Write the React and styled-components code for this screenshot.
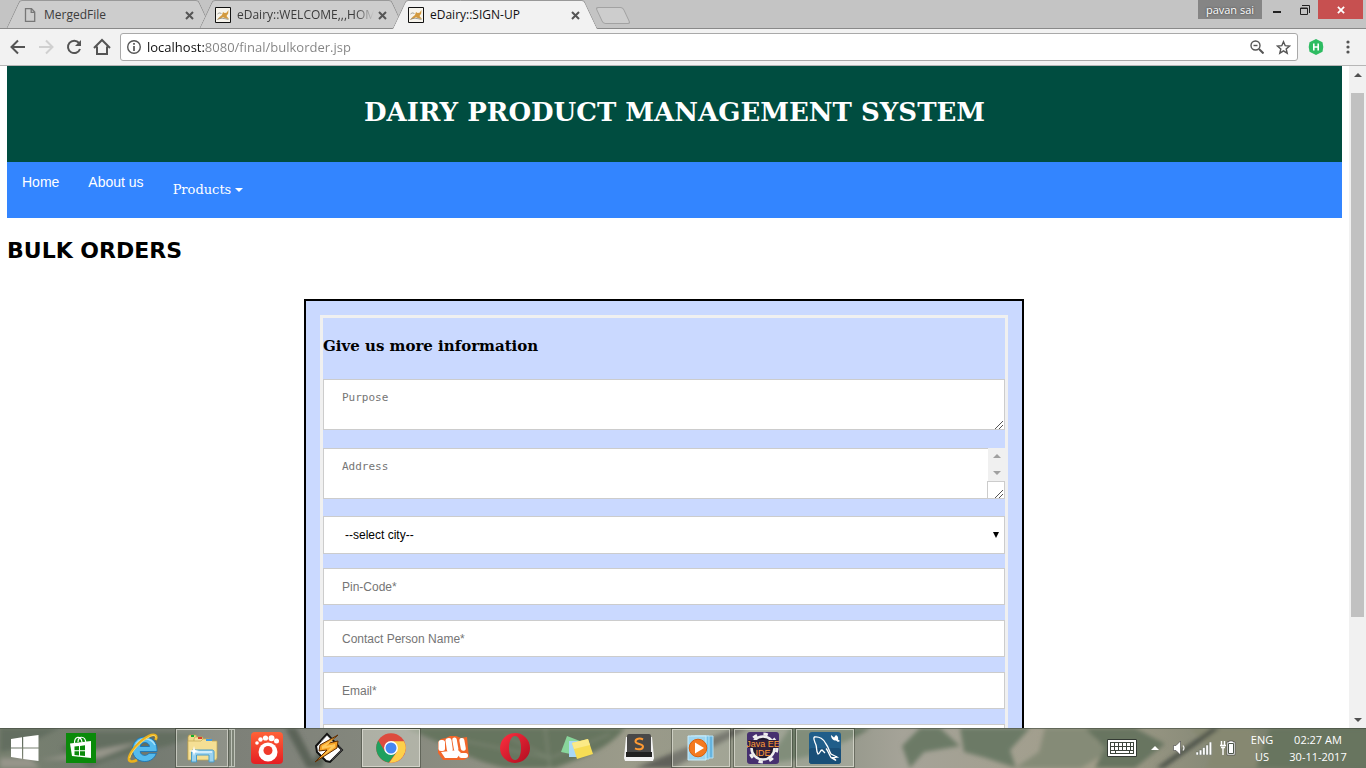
import React from "react";
import styled, { createGlobalStyle, css } from "styled-components";

const ui = `"Open Sans", "Noto Sans", sans-serif`;
const arial = `"Liberation Sans", Arial, sans-serif`;
const slab = `"DejaVu Serif", serif`;

const GlobalStyle = createGlobalStyle`
  *, *::before, *::after { box-sizing: border-box; }
  body { margin: 0; overflow: hidden; background: #fff; font-family: ${arial}; }
  button { padding: 0; border: 0; background: none; font: inherit; color: inherit; }
  svg { display: block; flex: none; }
`;

const Screen = styled.div`
  display: flex;
  flex-direction: column;
  height: 100vh;
`;

/* ---------- browser frame ---------- */

const TabStrip = styled.header`
  display: flex;
  justify-content: space-between;
  height: 29px;
  background: #c4c4c4;
  border-bottom: 1px solid #898989;
`;

const Tabs = styled.div`
  display: flex;
  padding-left: 6px;
`;

const tabEdge = css`
  content: "";
  position: absolute;
  top: 0;
  bottom: ${(p) => (p.$active ? "-1px" : "0")};
  width: 60%;
  background: ${(p) => (p.$active ? "#f2f2f2" : "#cdcdcd")};
  border-top: 1px solid #999;
  z-index: -1;
`;

const Tab = styled.div`
  position: relative;
  z-index: ${(p) => (p.$active ? 2 : 1)};
  isolation: isolate;
  display: flex;
  align-items: center;
  width: 206px;
  height: 28px;
  margin-right: -13px;
  padding: 2px 18px 0 16px;
  font: 12px/16px ${ui};
  color: ${(p) => (p.$active ? "#111" : "#3c3c3c")};

  &::before {
    ${tabEdge}
    left: 7px;
    border-left: 1px solid #8f8f8f;
    border-top-left-radius: 3px;
    transform: skewX(-25deg);
  }
  &::after {
    ${tabEdge}
    right: 7px;
    border-right: 1px solid #8f8f8f;
    border-top-right-radius: 3px;
    transform: skewX(25deg);
  }
`;

const TabTitle = styled.span`
  flex: 1;
  min-width: 0;
  margin: 0 4px 0 6px;
  overflow: hidden;
  white-space: nowrap;
  mask-image: ${(p) => (p.$fade ? "linear-gradient(to left, transparent, #000 18px)" : "none")};
`;

const NewTab = styled.button`
  width: 28px;
  height: 17px;
  margin: 7px 0 0 14px;
  border: 1px solid #a2a2a2;
  border-radius: 3px;
  background: #cdcdcd;
  transform: skewX(25deg);
`;

const WindowControls = styled.div`
  display: flex;
  align-items: flex-start;
  padding-right: 3px;
`;

const UserTag = styled.button`
  width: 64px;
  height: 19px;
  background: #858585;
  color: #fff;
  font: 11px/19px ${ui};
  text-shadow: 0 0 2px #333;
`;

const WindowButton = styled.button`
  display: flex;
  align-items: center;
  justify-content: center;
  width: ${(p) => p.$width}px;
  height: 19px;
  background: ${(p) => (p.$close ? "#c75050" : "transparent")};
`;

const Toolbar = styled.div`
  display: flex;
  align-items: center;
  height: 37px;
  padding: 0 4px 0 10px;
  background: #f2f2f2;
  border-bottom: 1px solid #b6b6b6;
`;

const ToolButton = styled.button`
  display: flex;
  align-items: center;
  justify-content: center;
  width: ${(p) => p.$width || 28}px;
  height: 28px;
`;

const Navigation = styled.div`
  display: flex;
  margin-left: -6px;
  padding-right: 4px;
`;

const Omnibox = styled.div`
  display: flex;
  align-items: center;
  flex: 1;
  height: 28px;
  padding: 0 1px 0 5px;
  background: #fff;
  border: 1px solid #a9a9a9;
  border-radius: 3px;
`;

const Address = styled.input`
  flex: 1;
  min-width: 0;
  height: 24px;
  margin-left: 5px;
  padding: 0;
  border: 0;
  outline: 0;
  font: 13px/24px ${ui};
  color: transparent;
  caret-color: #000;
  background: linear-gradient(to right, #111 58px, #828282 58px);
  background-clip: text;
`;

/* ---------- web page ---------- */

const Viewport = styled.div`
  display: flex;
  flex: 1;
  min-height: 0;
`;

const Page = styled.main`
  flex: 1;
  min-width: 0;
  padding: 0 7px;
  overflow: hidden;
  background: #fff;
`;

const Banner = styled.div`
  display: flex;
  align-items: center;
  justify-content: center;
  height: 96px;
  padding-bottom: 4px;
  background: #004d40;
`;

const SiteTitle = styled.h1`
  margin: 0;
  font: bold 26px/36px ${slab};
  color: #fff;
`;

const SiteNav = styled.nav`
  display: flex;
  align-items: flex-start;
  gap: 29px;
  height: 56px;
  padding: 10px 15px;
  background: #3385ff;
`;

const NavLink = styled.a`
  font: 14px/20px ${arial};
  color: #fff;
  text-decoration: none;
`;

const NavMenu = styled.button`
  display: flex;
  align-items: center;
  gap: 4px;
  height: 36px;
  font: 13px/20px ${slab};
  color: #fff;
`;

const PageTitle = styled.h2`
  margin: 19px 0 0;
  font: bold 22px/28px "DejaVu Sans", Verdana, sans-serif;
  color: #000;
`;

const FormArea = styled.div`
  display: flex;
  justify-content: center;
  margin-top: 34px;
  padding-right: 21px;
`;

const OrderForm = styled.form`
  width: 720px;
  max-width: 100%;
  padding: 14px;
  background: #cad9ff;
  border: 2px solid #000;
`;

const FieldSet = styled.div`
  display: flex;
  flex-direction: column;
  gap: 15px;
  border: 3px solid #f0f0f0;
`;

const FormTitle = styled.h3`
  margin: 18px 0 8px;
  font: bold 15px/20px ${slab};
  color: #000;
`;

const fieldBox = css`
  display: block;
  width: 100%;
  margin: 0;
  padding: 0 18px;
  border: 1px solid #ccc;
  border-radius: 0;
  outline: 0;
  background: #fff;
  &::placeholder { color: #757575; opacity: 1; }
`;

const TextField = styled.input`
  ${fieldBox}
  height: 37px;
  font: 12px/16px ${arial};
`;

const AreaField = styled.label`
  position: relative;
  display: block;
  margin-bottom: 3px;
`;

const TextArea = styled.textarea`
  ${fieldBox}
  height: 51px;
  padding-top: 10px;
  resize: none;
  overflow: hidden;
  font: 11px/15px "DejaVu Sans Mono", monospace;
`;

const Grip = styled.svg`
  position: absolute;
  right: 2px;
  bottom: 1px;
`;

const AreaScroll = styled.span`
  position: absolute;
  top: 0;
  right: 0;
  display: flex;
  flex-direction: column;
  justify-content: space-around;
  align-items: center;
  width: 17px;
  height: 33px;
  background: #f0f0f0;
`;

const GripBox = styled.span`
  position: absolute;
  right: 0;
  bottom: 0;
  width: 18px;
  height: 18px;
  border: 1px solid #ccc;
  background: #fff;
`;

const SelectWrap = styled.label`
  position: relative;
  display: block;
  margin: -1px 0;
`;

const Select = styled.select`
  ${fieldBox}
  height: 38px;
  padding-left: 21px;
  appearance: none;
  font: 12px/16px ${arial};
  color: #000;
`;

const SelectArrow = styled.svg`
  position: absolute;
  right: 6px;
  top: 16px;
  pointer-events: none;
`;

const Scrollbar = styled.div`
  display: flex;
  flex-direction: column;
  width: 17px;
  background: #f1f1f1;
`;

const ScrollButton = styled.button`
  display: flex;
  align-items: center;
  justify-content: center;
  height: 17px;
`;

const Track = styled.div`
  display: flex;
  flex-direction: column;
  flex: 1;
  padding: 0 2px;
`;

const Space = styled.div`
  flex: ${(p) => p.$grow};
`;

const Thumb = styled.div`
  flex: 524;
  background: #c1c1c1;
`;

/* ---------- taskbar ---------- */

const Taskbar = styled.footer`
  position: relative;
  isolation: isolate;
  display: flex;
  justify-content: space-between;
  height: 40px;
  overflow: hidden;
  background: #7c8474;
`;

const Wallpaper = styled.svg`
  position: absolute;
  inset: 0;
  z-index: -1;
  width: 100%;
  height: 40px;
`;

const Apps = styled.div`
  display: flex;
  align-items: stretch;
`;

const StartButton = styled.button`
  display: flex;
  align-items: center;
  justify-content: center;
  width: 50px;
`;

const AppButton = styled.button`
  display: flex;
  align-items: center;
  justify-content: center;
  width: 58px;
  margin: 1px 2px;
  border: 1px solid transparent;
  ${(p) =>
    p.$running &&
    css`
      border-color: rgba(235, 235, 225, 0.6);
      background: rgba(215, 218, 205, ${p.$focused ? 0.5 : 0.2});
      outline: 1px solid rgba(50, 55, 45, 0.45);
    `}
  ${(p) =>
    p.$stack &&
    css`
      width: 52px;
      margin-right: 8px;
      box-shadow: 4px 0 0 -1px #7d8377, 4px 0 0 0 #c0c4ba, 7px 0 0 -1px #7d8377, 7px 0 0 0 #c0c4ba;
    `}
`;

const Tray = styled.div`
  display: flex;
  align-items: center;
  padding-right: 14px;
  color: #fff;
`;

const TrayButton = styled.button`
  display: flex;
  align-items: center;
  justify-content: center;
  width: ${(p) => p.$width}px;
  height: 40px;
`;

const TrayText = styled.button`
  display: flex;
  flex-direction: column;
  width: ${(p) => p.$width}px;
  align-items: center;
  padding-bottom: 1px;
  font: 11px/17px ${ui};
  white-space: nowrap;
`;

/* ---------- icons ---------- */

const CloseX = ({ color = "#555", size = 9, weight = 2 }) => (
  <svg width={size} height={size} viewBox="0 0 9 9" stroke={color} strokeWidth={weight}>
    <path d="M1 1l7 7M8 1L1 8" />
  </svg>
);

const FileIcon = () => (
  <svg width="16" height="16" viewBox="0 0 16 16" fill="none" stroke="#777" strokeWidth="1.3">
    <path d="M3.5 1.6h6l3.2 3.4v9.4H3.5zM9.2 1.6v3.7h3.5" />
  </svg>
);

const TomcatIcon = () => (
  <svg width="16" height="16" viewBox="0 0 16 16">
    <path d="M.5.5h15v15H.5z" fill="#f7f4ec" stroke="#111" />
    <path d="M8 5l1.500 1 2-.3L13.500 3l-.3 3.600-1.700 2.400L14 12l-3-.5-3-1.200-3 1.500-3 1 2.500-2.800L7 8z" fill="#d39a3f" />
    <path d="M2.500 7c2-1.500 3-1.500 4 0M2.500 12.500c3-2 7-1 11 0" fill="none" stroke="#8a8a80" strokeWidth=".8" />
  </svg>
);

const Glyph = ({ children, color = "#545454", size = 18 }) => (
  <svg width={size} height={size} viewBox="0 0 18 18" fill="none" stroke={color} strokeWidth="2">
    {children}
  </svg>
);

const Triangle = ({ down, color = "#505050", width = 8 }) => (
  <svg width={width} height={width / 2} viewBox="0 0 8 4" fill={color}>
    <path d={down ? "M0 0h8L4 4z" : "M4 0l4 4H0z"} />
  </svg>
);

const GripLines = () => (
  <Grip width="8" height="8" viewBox="0 0 8 8" stroke="#555">
    <path d="M0 8L8 0M4 8L8 4" />
  </Grip>
);

const HackerIcon = () => (
  <svg width="16" height="16" viewBox="0 0 16 16">
    <path d="M8 0l6.5 3.2.8 4.8-.8 4.8L8 16l-6.5-3.2L.7 8l.8-4.8z" fill="#2ebc62" />
    <path d="M5.8 4.4v7.2M10.2 4.4v7.2M5.8 8h4.4" stroke="#fff" strokeWidth="1.6" />
  </svg>
);

const WindowsIcon = () => (
  <svg width="28" height="26" viewBox="0 0 28 26" fill="#fff">
    <path d="M0 4l11-1.700V12.400H0zM12.200 2.100L27.500 0v12.400H12.200zM0 13.600h11v10.200L0 22zM12.200 13.600h15.300V26l-15.300-2z" />
  </svg>
);

const StoreIcon = () => (
  <svg width="30" height="30" viewBox="0 0 30 30">
    <path d="M0 0h30v30H0z" fill="#0a8a0a" />
    <path d="M8.500 11C8 3 15 2 16 9M12 9C12 3 19 2 20 10" fill="none" stroke="#fff" strokeWidth="1.200" />
    <path d="M4 10.500L25 8v17L6 23z" fill="#fff" />
    <path d="M8.500 13.500l4.500-.5v4.300H8.500zM14 12.900l5-.6v5h-5zM8.500 18.300H13v4.200l-4.500-.5zM14 18.300h5V23l-5-.5z" fill="#0a8a0a" />
  </svg>
);

const ExplorerEIcon = () => (
  <svg width="32" height="32" viewBox="0 0 32 32">
    <path
      fillRule="evenodd"
      d="M5.500 17.500C5.500 10.500 10.500 5 17.800 5S30 10 30 17.500v2H13.200c.4 4.200 6 5.200 8.800 1.800h7.400C27.500 26.500 23.300 29.500 17.800 29.500 10.500 29.500 5.500 24.500 5.500 17.500zM13.300 14.500h9.200c-.5-5.300-8.600-5.300-9.200 0z"
      fill="#55bbee"
      stroke="#1c75b5"
      strokeWidth=".9"
    />
    <path d="M8 15c1.500-5 5-8 10-8 4 0 8 2 10 6" fill="none" stroke="#a6e1fb" strokeWidth="1.400" />
    <path d="M28.500 8C31 3 27 1.500 22 4 12 9 3 20 2 26c-.6 4 3.500 4.500 8 2" fill="none" stroke="#eab11c" strokeWidth="2.600" />
    <path d="M29 6.500C29.500 3 26 2.800 22 5 13 10 4 20 2.700 26" fill="none" stroke="#ffe27a" strokeWidth=".8" />
  </svg>
);

const FolderIcon = () => (
  <svg width="32" height="30" viewBox="0 0 32 30">
    <path d="M2 4l1-2h7l1 2h6v22H2z" fill="#f0d88a" stroke="#b99b48" strokeWidth=".7" />
    <path d="M8 6l1-2h7l1 2h6v20H8z" fill="#f6e29b" stroke="#c2a650" strokeWidth=".7" />
    <path d="M2 8h13l2-2h8l1 2h5v17l-1 2H2z" fill="#f5df94" stroke="#c2a650" strokeWidth=".7" />
    <path d="M5 2h3v2H5z" fill="#12b02b" />
    <path d="M12 4h4v2h-4z" fill="#d8412f" />
    <path d="M20 6h6v2h-6z" fill="#3f9ae6" />
    <path d="M5.500 29V19c0-1.500.8-2 2-2H26c1.500 0 2 .8 2 2v10h-5v-7H10.500v7z" fill="#9bd2ef" stroke="#4b9cc8" />
    <path d="M7 19h19" stroke="#e5f6ff" strokeWidth="1.500" />
    <path d="M8 13l1 4 4 1-4 1-1 4-1-4-4-1 4-1z" fill="#fff" />
  </svg>
);

const GomIcon = () => (
  <svg width="32" height="32" viewBox="0 0 32 32">
    <defs>
      <linearGradient id="gom" x1="0" y1="0" x2="0" y2="1">
        <stop stopColor="#ff6237" />
        <stop offset="1" stopColor="#e51e23" />
      </linearGradient>
    </defs>
    <rect width="32" height="32" rx="4" fill="url(#gom)" />
    <g fill="#fff">
      <circle cx="17" cy="20" r="9.500" />
      <circle cx="6" cy="11" r="1.800" />
      <circle cx="9.500" cy="7.500" r="2.200" />
      <circle cx="14.500" cy="6" r="2.600" />
      <circle cx="20.500" cy="6.300" r="3" />
      <circle cx="25.500" cy="9" r="2.500" />
    </g>
    <circle cx="17" cy="18.500" r="4.500" fill="#f03a2b" />
  </svg>
);

const WinampIcon = () => (
  <svg width="32" height="32" viewBox="0 0 32 32">
    <path d="M3 14L14 2l15 16-12 12-4-1-9-9z" fill="#fff" stroke="#111" strokeWidth="2" />
    <path d="M8 9l6-6 4 4M19 28l10-10-3-4" fill="none" stroke="#444" />
    <path d="M25 3L7 13l-1 6 8-1L2 30l22-14 1-7-9 2z" fill="#f7a225" stroke="#5d2d04" />
    <path d="M22 6L9 14v3l9-2-8 9 12-9v-3l-9 2z" fill="#ffc95d" />
  </svg>
);

const ChromeIcon = () => (
  <svg width="30" height="30" viewBox="0 0 30 30">
    <circle cx="15" cy="15" r="14.800" fill="#dd4b3e" />
    <path d="M2.200 7.500a14.800 14.800 0 0 0 10.500 22.100L21 18.500 9 18.500z" fill="#1fa05f" />
    <path d="M28 8.200H15l6 10.500-7.700 11A14.800 14.800 0 0 0 28 8.200z" fill="#fdd04a" />
    <circle cx="15" cy="15" r="6.900" fill="#fff" />
    <circle cx="15" cy="15" r="5.500" fill="#4587f3" />
  </svg>
);

const FistIcon = () => (
  <svg width="32" height="26" viewBox="0 0 32 26">
    <path d="M1 7l3-3 5-1 4-2 6 0 5 2 6-1 1 11 1 9-5 3H6L1 18z" fill="#f2662a" />
    <g fill="#fff">
      <rect x="1.500" y="5" width="6.500" height="11" rx="2.500" />
      <rect x="9" y="3" width="6" height="14" rx="2.500" transform="rotate(-8 12 9)" />
      <rect x="16" y="2.500" width="4.500" height="14" rx="2.200" transform="rotate(-10 18 9)" />
      <rect x="23" y="3" width="5" height="13" rx="2.500" transform="rotate(-10 25 9)" />
      <path d="M4 17l9-1 8-1 3 3-4 5-12 0z" />
      <rect x="22" y="18" width="9" height="5" rx="2.500" />
    </g>
  </svg>
);

const OperaIcon = () => (
  <svg width="30" height="30" viewBox="0 0 30 30">
    <defs>
      <linearGradient id="opera" x1="0" y1="0" x2="1" y2="1">
        <stop stopColor="#ff2f40" />
        <stop offset="1" stopColor="#b00d1f" />
      </linearGradient>
    </defs>
    <path fillRule="evenodd" d="M15 0a15 15 0 1 1 0 30 15 15 0 0 1 0-30zm0 3c-4 0-6 6-6 12s2 12 6 12 6-6 6-12-2-12-6-12z" fill="url(#opera)" />
  </svg>
);

const NotesIcon = () => (
  <svg width="32" height="26" viewBox="0 0 32 26">
    <path d="M6 1l13 5-5 14L0 17z" fill="#88d59b" />
    <path d="M8 6h14v16H8z" fill="#a9d8f5" />
    <path d="M11 8l16-4 5 15-16 5z" fill="#f6dd55" />
    <path d="M11 8l16-4 2 6-16 4z" fill="#fbea87" />
  </svg>
);

const SublimeIcon = () => (
  <svg width="32" height="30" viewBox="0 0 32 30">
    <path d="M3 4h26l2 21-1 3H2l-1-3z" fill="#f2f2f2" />
    <rect x="4" y="1" width="24" height="23" rx="2" fill="#484848" />
    <path d="M3 19h26v5H3z" fill="#222" />
    <path d="M20 6.500c-3-1.600-7.500-1-7.500 2s7.500 2 7.500 5-4.500 3.600-8 1.800" fill="none" stroke="#ff9a33" strokeWidth="2" />
  </svg>
);

const MediaIcon = () => (
  <svg width="28" height="26" viewBox="0 0 28 26">
    <path d="M8 1h18v22H8z" fill="#66b4df" stroke="#b5e2f7" />
    <path d="M4 1h18v23H4z" fill="#74c2ea" stroke="#b5e2f7" />
    <path d="M1 1h18v24H1z" fill="#9ed5f0" stroke="#c9ecfb" />
    <circle cx="11" cy="13" r="8.800" fill="#f47a20" stroke="#d85f0c" />
    <path d="M8 7.500v11l9-5.500z" fill="#fff" />
  </svg>
);

const JavaLabel = styled.text`
  font: 9px ${arial};
`;

const JavaIcon = () => (
  <svg width="32" height="32" viewBox="0 0 32 32">
    <rect width="32" height="32" rx="3" fill="#46306f" />
    <circle cx="16" cy="16" r="11.500" fill="#21192e" stroke="#eee" strokeWidth="2.500" />
    <circle cx="16" cy="16" r="14" fill="none" stroke="#eee" strokeWidth="3" strokeDasharray="4.400 6.600" />
    <path d="M1 8h30v8H1zM9 15h14v9H9z" fill="#30203c" />
    <g fill="#ff9838" textAnchor="middle">
      <JavaLabel x="16" y="15">Java EE</JavaLabel>
      <JavaLabel x="16" y="24">IDE</JavaLabel>
    </g>
  </svg>
);

const MySqlIcon = () => (
  <svg width="32" height="32" viewBox="0 0 32 32">
    <rect width="32" height="32" rx="3" fill="#205e8a" />
    <rect y="16" width="32" height="16" rx="3" fill="#194f78" />
    <path d="M5 5c5-1 10 2 12 7 3 4 3 7 5 10l6 3-4 .500 3 3-5-3c-3-5-3-7-5-9M5 5c-1 3 1 5 2 8s0 6 2 9c2 0 2-4 4-4l3 3" fill="none" stroke="#fff" strokeWidth="1.300" />
    <path d="M22 3l3 2.500L27 3c2 1 2.500 3 2 4.500l2 1.500-2 1-2-1.500c-3 0-5-2-5-5.500z" fill="#fff" />
  </svg>
);

const KeyboardIcon = () => (
  <svg width="30" height="18" viewBox="0 0 30 18">
    <path d="M.5.5h29v17H.5z" fill="#fff" stroke="#333a33" />
    <path d="M3 3h24v12H3z" fill="#3c443b" />
    <path d="M4 5.500h22M4 9.500h22" stroke="#fff" strokeWidth="3" strokeDasharray="3 1" />
    <path d="M4 13h4M9 13h13M23 13h3" stroke="#fff" strokeWidth="2" />
  </svg>
);

const SpeakerIcon = () => (
  <svg width="14" height="16" viewBox="0 0 14 16">
    <path d="M.5 5.500h2.500L7.500 1v14L3 10.500H.5z" fill="#fff" stroke="#444" strokeWidth=".6" />
    <path d="M10 5.500q2 2.500 0 5" fill="none" stroke="#eee" strokeWidth="1.200" />
  </svg>
);

const SignalIcon = () => (
  <svg width="16" height="13" viewBox="0 0 16 13" fill="#fff" stroke="#4a5048" strokeWidth=".4">
    <path d="M0 10h2.500v3H0zM3.300 8h2.500v5H3.300zM6.600 5.500h2.500V13H6.600zM9.900 3h2.500v10H9.900zM13.200 0h2.500v13h-2.500z" />
  </svg>
);

const BatteryIcon = () => (
  <svg width="16" height="16" viewBox="0 0 16 16">
    <path d="M9 1h4v1h2v13H7V2h2z" fill="#fff" stroke="#444" strokeWidth=".6" />
    <path d="M8.500 3.500h5v10h-5z" fill="#fff" stroke="#4d564b" />
    <path d="M1.500 1v4M4.500 1v4M0 5.500h6M1 7.500h4M3 8v7" fill="none" stroke="#fff" strokeWidth="1.400" />
  </svg>
);

const Leaves = () => (
  <Wallpaper viewBox="0 0 1366 40" preserveAspectRatio="xMidYMid slice" aria-hidden="true">
    <defs>
      <linearGradient id="ground">
        <stop stopColor="#77806f" />
        <stop offset=".1" stopColor="#737a70" />
        <stop offset=".17" stopColor="#7d8078" />
        <stop offset=".27" stopColor="#84877d" />
        <stop offset=".46" stopColor="#9b9b8a" />
        <stop offset=".6" stopColor="#8f9486" />
        <stop offset=".66" stopColor="#a5a398" />
        <stop offset=".8" stopColor="#a19d8a" />
        <stop offset="1" stopColor="#66715f" />
      </linearGradient>
      <filter id="soft"><feGaussianBlur stdDeviation="2" /></filter>
    </defs>
    <path d="M0 0h1366v40H0z" fill="url(#ground)" />
    <g filter="url(#soft)">
      <path d="M0 0h60L20 20 0 24zM90 40c40-20 80-16 110-36H90L60 20z" fill="#636e61" />
      <path d="M40 32l100-18-40 16zM0 30h30l10 10H0z" fill="#96958a" />
      <path d="M285 0l22 40h10L296 0zM330 0l-20 40h12z" fill="#5b6358" />
      <path d="M405 0h220c-16 20-36 27-70 40h-50c-36-8-54-22-100-40z" fill="#66745f" />
      <path d="M545 0l5 40M550 30l60-24M548 30L460 12M546 28l-40-20" stroke="#8b9481" />
      <path d="M635 40L735 0h14l-76 40z" fill="#60605a" />
      <path d="M790 0h80c-10 8-30 16-45 22-20 10-50 12-60 14zM920 0h20l20 18-36 6-14 16-8-22zM960 0h70l-20 22 6 18-30-10-22-6z" fill="#6c7a66" />
      <path d="M1045 0h60l-10 12 16 10-30 18h-66l24-16z" fill="#858b77" />
      <path d="M1085 0h50l30 16-30 24h-40l10-20z" fill="#687561" />
      <path d="M1190 0h60l16 20 20 20h-80l8-18z" fill="#868871" />
      <path d="M1212 0l-56 40h8l56-40z" fill="#4a5047" />
      <path d="M1270 0h96v40h-110z" fill="#67745f" />
    </g>
    <path d="M0 .5h1366" stroke="#434b40" strokeOpacity=".6" />
  </Wallpaper>
);

const apps = [
  { name: "Store", icon: <StoreIcon /> },
  { name: "Internet Explorer", icon: <ExplorerEIcon /> },
  { name: "File Explorer", icon: <FolderIcon />, running: true, stack: true },
  { name: "GOM Player", icon: <GomIcon /> },
  { name: "Winamp", icon: <WinampIcon /> },
  { name: "Google Chrome", icon: <ChromeIcon />, running: true, focused: true },
  { name: "Micromax", icon: <FistIcon /> },
  { name: "Opera", icon: <OperaIcon /> },
  { name: "Sticky Notes", icon: <NotesIcon /> },
  { name: "Sublime Text", icon: <SublimeIcon /> },
  { name: "Media Player", icon: <MediaIcon />, running: true },
  { name: "Eclipse Java EE", icon: <JavaIcon />, running: true },
  { name: "MySQL Workbench", icon: <MySqlIcon />, running: true },
];

const tabs = [
  { title: "MergedFile", icon: <FileIcon /> },
  { title: "eDairy::WELCOME,,,HOME", icon: <TomcatIcon />, fade: true },
  { title: "eDairy::SIGN-UP", icon: <TomcatIcon />, active: true },
];

const fields = ["Pin-Code*", "Contact Person Name*", "Email*", "Phone*"];

export default function App() {
  return (
    <Screen>
      <GlobalStyle />
      <TabStrip>
        <Tabs>
          {tabs.map((tab) => (
            <Tab key={tab.title} $active={tab.active}>
              {tab.icon}
              <TabTitle $fade={tab.fade}>{tab.title}</TabTitle>
              <button aria-label={`Close ${tab.title}`}><CloseX /></button>
            </Tab>
          ))}
          <NewTab aria-label="New tab" />
        </Tabs>
        <WindowControls>
          <UserTag>pavan sai</UserTag>
          <WindowButton $width={30} aria-label="Minimize">
            <svg width="8" height="10" viewBox="0 0 8 10"><path d="M0 6h8v2H0z" fill="#222" /></svg>
          </WindowButton>
          <WindowButton $width={26} aria-label="Restore">
            <svg width="10" height="10" viewBox="0 0 10 10" fill="none" stroke="#222">
              <path d="M2 .5h7.500V8M.5 3h7v6.500h-7zM.5 3.500h7" />
            </svg>
          </WindowButton>
          <WindowButton $close $width={45} aria-label="Close window"><CloseX color="#fff" size={8} /></WindowButton>
        </WindowControls>
      </TabStrip>

      <Toolbar>
        <Navigation>
          <ToolButton aria-label="Back"><Glyph><path d="M9 2.500L2.500 9 9 15.500M3 9h13" /></Glyph></ToolButton>
          <ToolButton aria-label="Forward"><Glyph color="#d0d0d0"><path d="M9 2.500L15.500 9 9 15.500M15 9H2" /></Glyph></ToolButton>
          <ToolButton aria-label="Reload">
            <Glyph>
              <path d="M14 5a6.200 6.200 0 1 0 1 6" />
              <path d="M16 2v6h-6z" fill="#545454" stroke="none" />
            </Glyph>
          </ToolButton>
          <ToolButton aria-label="Home"><Glyph><path d="M1 10l8-8 8 8M4 8.500V16h10V8.500" /></Glyph></ToolButton>
        </Navigation>
        <Omnibox>
          <svg width="16" height="16" viewBox="0 0 16 16" fill="none" stroke="#555">
            <circle cx="8" cy="8" r="6.300" strokeWidth="1.400" />
            <path d="M8 7v5M8 4v1.800" strokeWidth="1.700" />
          </svg>
          <Address aria-label="Address" defaultValue="localhost:8080/final/bulkorder.jsp" />
          <ToolButton $width={26} aria-label="Zoom">
            <svg width="14" height="14" viewBox="0 0 14 14" fill="none" stroke="#555" strokeWidth="1.400">
              <circle cx="5.500" cy="5.500" r="4.500" />
              <path d="M3.500 5.500h4" />
              <path d="M9 9l4.500 4.500" strokeWidth="2" />
            </svg>
          </ToolButton>
          <ToolButton $width={26} aria-label="Bookmark">
            <svg width="15" height="15" viewBox="0 0 15 15" fill="none" stroke="#555" strokeWidth="1.400">
              <path d="M7.500 1.700l1.700 4 4.300.4-3.300 2.800 1 4.300-3.700-2.300-3.700 2.300 1-4.300L1.500 6.100l4.300-.4z" />
            </svg>
          </ToolButton>
        </Omnibox>
        <ToolButton $width={36} aria-label="HackerRank extension"><HackerIcon /></ToolButton>
        <ToolButton aria-label="Menu">
          <svg width="4" height="14" viewBox="0 0 4 14" fill="#545454">
            <circle cx="2" cy="2" r="1.600" /><circle cx="2" cy="7" r="1.600" /><circle cx="2" cy="12" r="1.600" />
          </svg>
        </ToolButton>
      </Toolbar>

      <Viewport>
        <Page>
          <Banner><SiteTitle>DAIRY PRODUCT MANAGEMENT SYSTEM</SiteTitle></Banner>
          <SiteNav>
            <NavLink href="#home">Home</NavLink>
            <NavLink href="#about">About us</NavLink>
            <NavMenu>Products <Triangle down color="#fff" /></NavMenu>
          </SiteNav>
          <PageTitle>BULK ORDERS</PageTitle>
          <FormArea>
            <OrderForm>
              <FieldSet>
                <FormTitle>Give us more information</FormTitle>
                <AreaField>
                  <TextArea aria-label="Purpose" placeholder="Purpose" />
                  <GripLines />
                </AreaField>
                <AreaField>
                  <TextArea aria-label="Address" placeholder="Address" />
                  <AreaScroll>
                    <Triangle color="#a0a0a0" />
                    <Triangle down color="#a0a0a0" />
                  </AreaScroll>
                  <GripBox />
                  <GripLines />
                </AreaField>
                <SelectWrap>
                  <Select aria-label="City" defaultValue="">
                    <option value="">--select city--</option>
                  </Select>
                  <SelectArrow width="6" height="6" viewBox="0 0 6 6"><path d="M0 0h6L3 6z" /></SelectArrow>
                </SelectWrap>
                {fields.map((name) => (
                  <TextField key={name} aria-label={name} placeholder={name} />
                ))}
              </FieldSet>
            </OrderForm>
          </FormArea>
        </Page>
        <Scrollbar>
          <ScrollButton aria-label="Scroll up"><Triangle /></ScrollButton>
          <Track>
            <Space $grow={10} />
            <Thumb />
            <Space $grow={94} />
          </Track>
          <ScrollButton aria-label="Scroll down"><Triangle down /></ScrollButton>
        </Scrollbar>
      </Viewport>

      <Taskbar>
        <Leaves />
        <Apps>
          <StartButton aria-label="Start"><WindowsIcon /></StartButton>
          {apps.map((app) => (
            <AppButton key={app.name} aria-label={app.name} $running={app.running} $focused={app.focused} $stack={app.stack}>
              {app.icon}
            </AppButton>
          ))}
        </Apps>
        <Tray>
          <TrayButton $width={40} aria-label="Keyboard"><KeyboardIcon /></TrayButton>
          <TrayButton $width={26} aria-label="Hidden icons"><Triangle color="#fff" /></TrayButton>
          <TrayButton $width={24} aria-label="Volume"><SpeakerIcon /></TrayButton>
          <TrayButton $width={24} aria-label="Network"><SignalIcon /></TrayButton>
          <TrayButton $width={24} aria-label="Battery"><BatteryIcon /></TrayButton>
          <TrayText $width={44}><span>ENG</span><span>US</span></TrayText>
          <TrayText $width={68}><span>02:27 AM</span><span>30-11-2017</span></TrayText>
        </Tray>
      </Taskbar>
    </Screen>
  );
}
